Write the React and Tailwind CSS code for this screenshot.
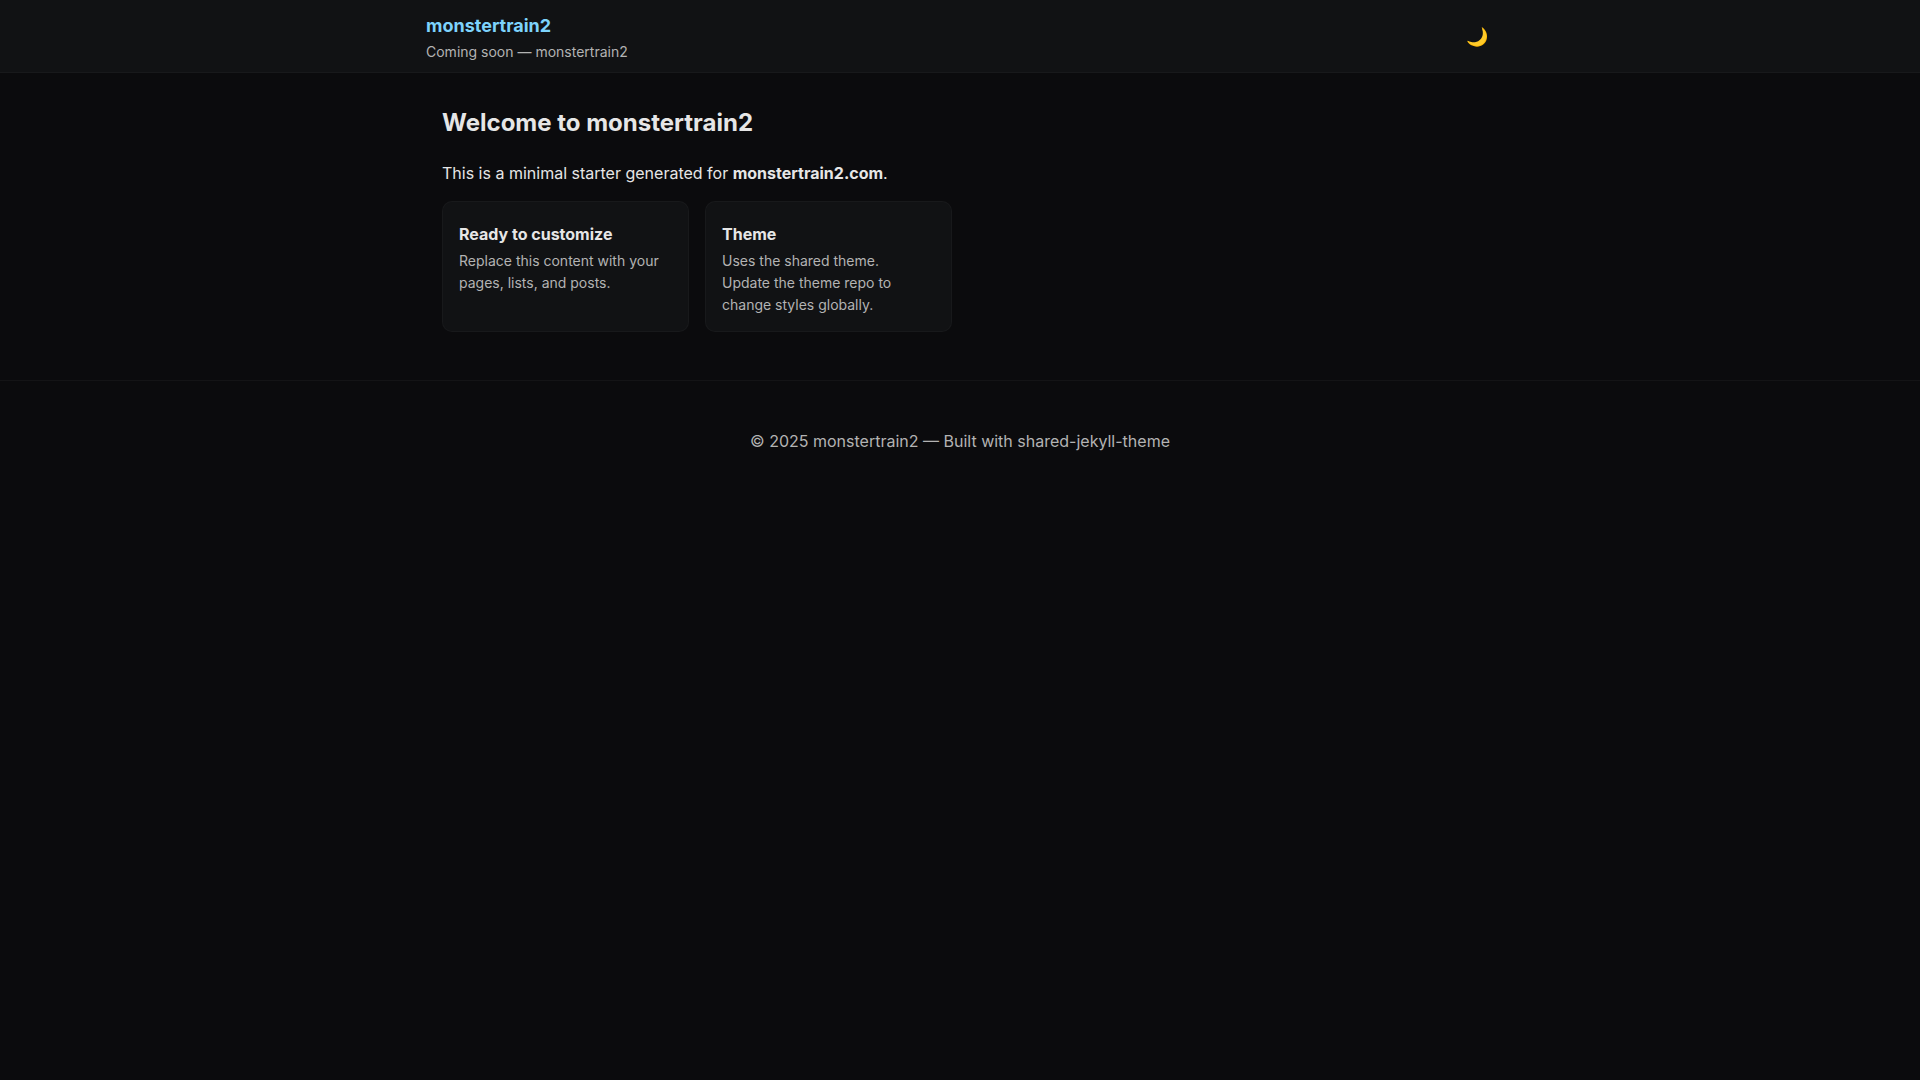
const cards = [
  { title: "Ready to customize", text: "Replace this content with your pages, lists, and posts." },
  { title: "Theme", text: "Uses the shared theme. Update the theme repo to change styles globally." },
];

export default function App() {
  return (
    <div className="min-h-screen bg-[#0b0b0d] font-[Inter,sans-serif] text-base leading-6 text-[#e6e6e6]">
      <header className="border-b border-white/3 bg-[#111214]">
        <div className="mx-auto flex max-w-[1100px] items-center justify-between px-4 pt-3 pb-2.5">
          <div>
            <a href="#" className="block text-lg leading-7 font-bold text-[#7dd3fc]">monstertrain2</a>
            <p className="mt-0.5 text-sm leading-5 text-[#b3b3b3]">Coming soon — monstertrain2</p>
          </div>
          <button type="button" aria-label="Toggle theme" className="px-1.5 py-2 text-lg leading-6">🌙</button>
        </div>
      </header>
      <main className="mx-auto max-w-[1068px] px-4 pt-8 pb-12">
        <h1 className="text-2xl leading-9 font-bold">Welcome to monstertrain2</h1>
        <p className="mt-5">
          This is a minimal starter generated for <strong className="font-bold">monstertrain2.com</strong>.
        </p>
        <div className="mt-4 grid grid-cols-4 gap-4">
          {cards.map((c) => (
            <article key={c.title} className="rounded-[10px] border border-white/3 bg-[#111214] pt-4 pr-6 pb-[15px] pl-4">
              <h2 className="mt-1 font-bold">{c.title}</h2>
              <p className="mt-1 text-sm leading-[22px] text-[#b3b3b3]">{c.text}</p>
            </article>
          ))}
        </div>
      </main>
      <footer className="border-t border-white/4 px-4 py-12 text-center text-[#b3b3b3]">
        © 2025 monstertrain2 — Built with shared-jekyll-theme
      </footer>
    </div>
  );
}
